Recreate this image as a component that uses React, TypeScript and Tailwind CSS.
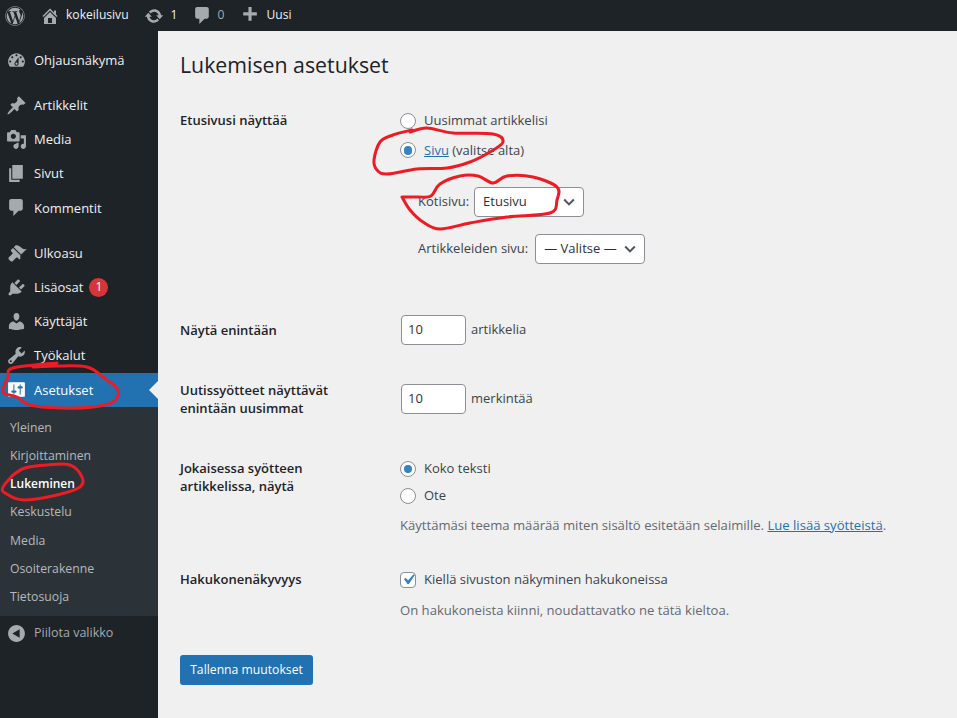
import { FaWordpress } from 'react-icons/fa';
import type { ReactNode } from 'react';

const icons = {
  dashboard:
    'M3.76 16h12.48c1.1-1.37 1.76-3.11 1.76-5 0-4.42-3.58-8-8-8s-8 3.58-8 8c0 1.89.66 3.63 1.76 5zM10 4c.55 0 1 .45 1 1s-.45 1-1 1-1-.45-1-1 .45-1 1-1zM6 6c.55 0 1 .45 1 1s-.45 1-1 1-1-.45-1-1 .45-1 1-1zm8 0c.55 0 1 .45 1 1s-.45 1-1 1-1-.45-1-1 .45-1 1-1zm-5.37 5.55L12 7v6c0 1.1-.9 2-2 2s-2-.9-2-2c0-.57.24-1.08.63-1.45zM4 10c.55 0 1 .45 1 1s-.45 1-1 1-1-.45-1-1 .45-1 1-1zm12 0c.55 0 1 .45 1 1s-.45 1-1 1-1-.45-1-1 .45-1 1-1zm-5 3c0-.55-.45-1-1-1s-1 .45-1 1 .45 1 1 1 1-.45 1-1z',
  post: 'M10.44 3.02l1.82-1.82 6.36 6.35-1.83 1.82c-1.05-.68-2.48-.57-3.41.36l-.75.75c-.92.93-1.04 2.35-.35 3.41l-1.83 1.82-2.41-2.41-2.8 2.79c-.42.42-3.38 2.71-3.8 2.29s1.86-3.39 2.28-3.81l2.79-2.79L4.1 9.36l1.83-1.82c1.05.69 2.48.57 3.4-.36l.75-.75c.93-.92 1.05-2.35.36-3.41z',
  media:
    'M13 11V4c0-.55-.45-1-1-1h-1.67L9 1H5L3.67 3H2c-.55 0-1 .45-1 1v7c0 .55.45 1 1 1h10c.55 0 1-.45 1-1zM7 4.5c1.38 0 2.5 1.12 2.5 2.5S8.38 9.5 7 9.5 4.5 8.38 4.5 7 5.62 4.5 7 4.5zM14 6h5v10.5c0 1.38-1.12 2.5-2.5 2.5S14 17.88 14 16.5s1.12-2.5 2.5-2.5c.17 0 .34.02.5.05V9h-3V6zm-4 8.05V13h2v3.5c0 1.38-1.12 2.5-2.5 2.5S7 17.88 7 16.5 8.12 14 9.5 14c.17 0 .34.02.5.05z',
  page: 'M6 15V2h10v13H6zm-1 1h8v2H3V5h2v11z',
  comment: 'M5 2h9c1.1 0 2 .9 2 2v7c0 1.1-.9 2-2 2h-2l-5 5v-5H5c-1.1 0-2-.9-2-2V4c0-1.1.9-2 2-2z',
  appearance:
    'M14.48 11.06L7.41 3.99l1.5-1.5c.5-.56 2.3-.47 3.51.32 1.21.8 1.43 1.28 2.91 2.1 1.18.64 2.45 1.26 4.45.85zm-.71.71L6.7 4.7 4.93 6.47c-.39.39-.39 1.02 0 1.41l1.06 1.06c.39.39.39 1.03 0 1.42-.6.6-3.22 3.22-3.22 3.22-.59.59-.59 1.54 0 2.12l1.59 1.59c.58.59 1.53.59 2.12 0 0 0 2.62-2.62 3.22-3.22.39-.39 1.03-.39 1.42 0l1.06 1.06c.39.39 1.02.39 1.41 0z',
  plugin:
    'M13.11 4.36L9.87 7.6 8 5.73l3.24-3.24c.35-.34 1.05-.2 1.56.32.52.51.66 1.21.31 1.55zm-8 1.77l.91-1.12 9.01 9.01-1.19.84c-.71.71-2.63 1.16-3.82 1.16H6.14L4.9 17.26c-.59.59-1.54.59-2.12 0-.59-.58-.59-1.53 0-2.12l1.24-1.24v-3.88c0-1.13.4-3.19 1.09-3.89zm7.26 3.97l3.24-3.24c.34-.35 1.04-.21 1.55.31.52.51.66 1.21.31 1.55l-3.24 3.25z',
  users:
    'M10 9.25c-2.27 0-2.73-3.44-2.73-3.44C7 4.02 7.82 2 9.97 2c2.16 0 2.98 2.02 2.71 3.81 0 0-.41 3.44-2.68 3.44zm0 2.57L12.72 10c2.39 0 4.52 2.33 4.52 4.53v2.49s-3.65 1.13-7.24 1.13c-3.65 0-7.24-1.13-7.24-1.13v-2.49c0-2.25 1.94-4.48 4.47-4.48z',
  tools:
    'M16.68 9.77c-1.34 1.34-3.3 1.67-4.95.99l-5.41 6.52c-.99.99-2.59.99-3.58 0s-.99-2.59 0-3.57l6.52-5.42c-.68-1.65-.35-3.61.99-4.95 1.28-1.28 3.12-1.62 4.72-1.06l-2.89 2.89 2.82 2.82 2.86-2.87c.53 1.58.18 3.39-1.08 4.65zM3.81 16.21c.4.39 1.04.39 1.43 0 .4-.4.4-1.04 0-1.43-.39-.4-1.03-.4-1.43 0-.39.39-.39 1.03 0 1.43z',
  settings:
    'M18 16V4c0-.55-.45-1-1-1H3c-.55 0-1 .45-1 1v12c0 .55.45 1 1 1h14c.55 0 1-.45 1-1zM8 11h1c.55 0 1 .45 1 1s-.45 1-1 1H8v1.5c0 .28-.22.5-.5.5s-.5-.22-.5-.5V13H6c-.55 0-1-.45-1-1s.45-1 1-1h1V5.5c0-.28.22-.5.5-.5s.5.22.5.5V11zm5-2h-1c-.55 0-1-.45-1-1s.45-1 1-1h1V5.5c0-.28.22-.5.5-.5s.5.22.5.5V7h1c.55 0 1 .45 1 1s-.45 1-1 1h-1v5.5c0 .28-.22.5-.5.5s-.5-.22-.5-.5V9z',
  collapse: 'M18 10c0-4.42-3.58-8-8-8s-8 3.58-8 8 3.58 8 8 8 8-3.58 8-8zm-5 4l-7-4 7-4v8z',
  home: 'M16 8.5l1.53 1.53-1.06 1.06L10 4.62l-6.47 6.47-1.06-1.06L10 2.5l4 4v-2h2v4zm-6-2.46l6 5.99V18H4v-5.97zM12 17v-5H8v5h4z',
  update:
    'M10.2 3.28c3.53 0 6.43 2.61 6.92 6h2.08l-3.5 4-3.5-4h2.32c-.45-1.97-2.21-3.45-4.32-3.45-1.45 0-2.73.71-3.54 1.78L4.95 5.66C6.23 4.2 8.11 3.28 10.2 3.28zm-.4 13.44c-3.52 0-6.43-2.61-6.92-6H.8l3.5-4c1.17 1.33 2.33 2.67 3.5 4H5.48c.45 1.97 2.21 3.45 4.32 3.45 1.45 0 2.73-.71 3.54-1.78l1.71 1.95c-1.28 1.46-3.15 2.38-5.25 2.38z',
  plus: 'M17 7v3h-5v5H9v-5H4V7h5V2h3v5h5z',
};

function Dash({ d, className }: { d: string; className?: string }) {
  return (
    <svg viewBox="0 0 20 20" className={className} fill="currentColor" fillRule="evenodd">
      <path d={d} />
    </svg>
  );
}

function MenuItem({ icon, label, badge, active }: { icon: string; label: string; badge?: string; active?: boolean }) {
  return (
    <div className={`relative flex h-[34.2px] items-center ${active ? 'bg-[#2271b1] text-white' : 'text-[#f0f0f1]'}`}>
      <span className={`flex w-[32px] justify-center ${active ? 'text-white' : 'text-[#a7aaad]'}`}>
        <Dash d={icon} className="h-[21px] w-[21px]" />
      </span>
      <span className="ml-[2px] pt-[1px]">{label}</span>
      {badge && (
        <span className="ml-[6px] flex h-[19px] w-[19px] items-center justify-center rounded-full bg-[#d63638] text-[12px] text-white">
          {badge}
        </span>
      )}
      {active && (
        <span className="absolute right-0 top-1/2 h-0 w-0 -translate-y-1/2 border-y-[9px] border-r-[9px] border-y-transparent border-r-[#f0f0f1]" />
      )}
    </div>
  );
}

function Sidebar() {
  const sub = ['Yleinen', 'Kirjoittaminen', 'Lukeminen', 'Keskustelu', 'Media', 'Osoiterakenne', 'Tietosuoja'];
  return (
    <aside className="w-[158px] shrink-0 bg-[#1d2327] pt-[12px]">
      <MenuItem icon={icons.dashboard} label="Ohjausnäkymä" />
      <div className="h-[11px]" />
      <MenuItem icon={icons.post} label="Artikkelit" />
      <MenuItem icon={icons.media} label="Media" />
      <MenuItem icon={icons.page} label="Sivut" />
      <MenuItem icon={icons.comment} label="Kommentit" />
      <div className="h-[11px]" />
      <MenuItem icon={icons.appearance} label="Ulkoasu" />
      <MenuItem icon={icons.plugin} label="Lisäosat" badge="1" />
      <MenuItem icon={icons.users} label="Käyttäjät" />
      <MenuItem icon={icons.tools} label="Työkalut" />
      <MenuItem icon={icons.settings} label="Asetukset" active />
      <div className="bg-[#2c3338] pb-[5px] pt-[7px] text-[12.25px]">
        {sub.map((s) => (
          <div
            key={s}
            className={`flex h-[28.2px] items-center pl-[10px] ${
              s === 'Lukeminen' ? 'text-[12px] font-semibold text-white' : 'text-[#b4b9be]'
            }`}
          >
            {s}
          </div>
        ))}
      </div>
      <div className="flex h-[34.2px] items-center text-[#a7aaad]">
        <span className="flex w-[32px] justify-center">
          <Dash d={icons.collapse} className="h-[21px] w-[21px]" />
        </span>
        <span className="ml-[2px] text-[12.5px]">Piilota valikko</span>
      </div>
    </aside>
  );
}

function TopBar() {
  return (
    <header className="flex h-[31px] shrink-0 items-center bg-[#1d2327] text-[12.1px] text-[#f0f0f1]">
      <FaWordpress className="ml-[5px] h-[20px] w-[20px] text-[#a7aaad]" />
      <Dash d={icons.home} className="ml-[15px] h-[20px] w-[20px] text-[#a7aaad]" />
      <span className="ml-[6px]">kokeilusivu</span>
      <Dash d={icons.update} className="ml-[15px] h-[20px] w-[20px] text-[#a7aaad]" />
      <span className="ml-[7px]">1</span>
      <Dash d={icons.comment} className="ml-[14px] h-[21px] w-[21px] text-[#a7aaad]" />
      <span className="ml-[5px] text-[#a7aaad]">0</span>
      <Dash d={icons.plus} className="ml-[15px] h-[21px] w-[21px] text-[#a7aaad]" />
      <span className="ml-[6px]">Uusi</span>
    </header>
  );
}

function Radio({ checked, children }: { checked?: boolean; children: ReactNode }) {
  return (
    <div className="flex items-center">
      <span className="flex h-[16px] w-[16px] shrink-0 items-center justify-center rounded-full border border-[#8c8f94] bg-white">
        {checked && <span className="h-[8.5px] w-[8.5px] rounded-full bg-[#3582c4]" />}
      </span>
      <span className="ml-[8px]">{children}</span>
    </div>
  );
}

function Select({ value, className }: { value: string; className: string }) {
  return (
    <div
      className={`flex h-[30px] items-center justify-between rounded-[4px] border border-[#8c8f94] bg-white pl-[8px] pr-[6px] text-[#2c3338] ${className}`}
    >
      <span>{value}</span>
      <svg viewBox="0 0 20 20" className="h-[16px] w-[16px] text-[#50575e]" fill="none" stroke="currentColor" strokeWidth="2.6">
        <path d="M4 7l6 6 6-6" />
      </svg>
    </div>
  );
}

function NumberField({ value }: { value: string }) {
  return (
    <div className="ml-[1px] flex h-[30px] w-[65px] items-center rounded-[4px] border border-[#8c8f94] bg-white pl-[6px] text-[#2c3338]">
      {value}
    </div>
  );
}

function Label({ children }: { children: ReactNode }) {
  return <div className="w-[220px] shrink-0 text-[#1d2327] font-semibold leading-[18px]">{children}</div>;
}

// catmull-rom through the hand drawn points
function scribble(pts: number[][]) {
  let d = `M${pts[0][0]} ${pts[0][1]}`;
  for (let i = 0; i < pts.length - 1; i++) {
    const p0 = pts[i - 1] ?? pts[i];
    const p1 = pts[i];
    const p2 = pts[i + 1];
    const p3 = pts[i + 2] ?? p2;
    const c1x = p1[0] + (p2[0] - p0[0]) / 6;
    const c1y = p1[1] + (p2[1] - p0[1]) / 6;
    const c2x = p2[0] - (p3[0] - p1[0]) / 6;
    const c2y = p2[1] - (p3[1] - p1[1]) / 6;
    d += ` C${c1x} ${c1y} ${c2x} ${c2y} ${p2[0]} ${p2[1]}`;
  }
  return d;
}

const marks = [
  [[410,132],[427,128],[453,133],[493,134],[503,142],[490,152],[470,162],[447,168],[417,169],[387,174],[377,170],[374,160],[380,142],[393,135],[412,130]],
  [[402,197],[418,197],[431,196],[440,184],[460,176],[478,176],[493,183],[507,176],[533,177],[557,187],[557,200],[550,213],[507,217],[470,223],[440,229],[423,222],[410,210],[402,197]],
  [[57,363],[13,368],[8,377],[3,392],[17,397],[30,405],[60,408],[93,407],[113,402],[118,390],[103,377],[87,367],[57,366],[33,367]],
  [[13,475],[25,468],[47,465],[70,465],[82,477],[80,487],[57,495],[23,500],[5,493],[3,487],[13,475]],
];

export default function App() {
  return (
    <div className="relative flex h-[718px] w-[957px] flex-col overflow-hidden bg-[#f0f0f1] font-['Open_Sans',sans-serif] text-[13px] text-[#3c434a]">
      <TopBar />
      <div className="flex min-h-0 flex-1">
        <Sidebar />
        <main className="flex-1 pl-[22px] pt-[20px]">
          <h1 className="text-[21.3px] leading-[28px] text-[#1d2327]">Lukemisen asetukset</h1>

          <div className="mt-[32px] flex">
            <Label>Etusivusi näyttää</Label>
            <div>
              <Radio>Uusimmat artikkelisi</Radio>
              <div className="mt-[10px]">
                <Radio checked>
                  <span className="text-[#2271b1] underline">Sivu</span> (valitse alta)
                </Radio>
              </div>
              <div className="ml-[18px] mt-[27px] flex items-center gap-[5px]">
                Kotisivu:
                <Select value="Etusivu" className="w-[110px]" />
              </div>
              <div className="ml-[18px] mt-[17px] flex items-center gap-[7px]">
                Artikkeleiden sivu:
                <Select value="— Valitse —" className="w-[110px]" />
              </div>
            </div>
          </div>

          <div className="mt-[51px] flex items-center">
            <Label>Näytä enintään</Label>
            <NumberField value="10" />
            <span className="ml-[5px]">artikkelia</span>
          </div>

          <div className="mt-[36px] flex items-center">
            <Label>
              Uutissyötteet näyttävät
              <br />
              enintään uusimmat
            </Label>
            <NumberField value="10" />
            <span className="ml-[5px]">merkintää</span>
          </div>

          <div className="mt-[42px] flex">
            <Label>
              Jokaisessa syötteen
              <br />
              artikkelissa, näytä
            </Label>
            <div>
              <Radio checked>Koko teksti</Radio>
              <div className="mt-[7.5px]">
                <Radio>Ote</Radio>
              </div>
              <p className="mt-[10px] text-[13.1px] text-[#646970]">
                Käyttämäsi teema määrää miten sisältö esitetään selaimille.{' '}
                <span className="text-[#2271b1] underline">Lue lisää syötteistä</span>.
              </p>
            </div>
          </div>

          <div className="mt-[35px] flex">
            <Label>Hakukonenäkyvyys</Label>
            <div>
              <div className="flex items-center">
                <span className="flex h-[16px] w-[16px] items-center justify-center rounded-[4px] border border-[#8c8f94] bg-white">
                  <svg viewBox="0 0 20 20" className="h-[21px] w-[21px] shrink-0 text-[#3582c4]" fill="currentColor">
                    <path d="M14.83 4.89l1.34.94-5.81 8.38H9.02L5.78 9.67l1.34-1.25 2.57 2.4z" />
                  </svg>
                </span>
                <span className="ml-[8px] text-[13.05px]">Kiellä sivuston näkyminen hakukoneissa</span>
              </div>
              <p className="mt-[11px] text-[13.1px] text-[#646970]">On hakukoneista kiinni, noudattavatko ne tätä kieltoa.</p>
            </div>
          </div>

          <button className="mt-[35px] flex h-[30px] w-[133px] items-center justify-center rounded-[3px] bg-[#2271b1] text-[12.2px] text-white">
            Tallenna muutokset
          </button>
        </main>
      </div>

      <svg className="pointer-events-none absolute left-0 top-0 h-[718px] w-[957px]" viewBox="0 0 957 718" fill="none">
        {marks.map((m, i) => (
          <path key={i} d={scribble(m)} stroke="#ed1c24" strokeWidth="3" strokeLinecap="round" strokeLinejoin="round" />
        ))}
      </svg>
    </div>
  );
}
